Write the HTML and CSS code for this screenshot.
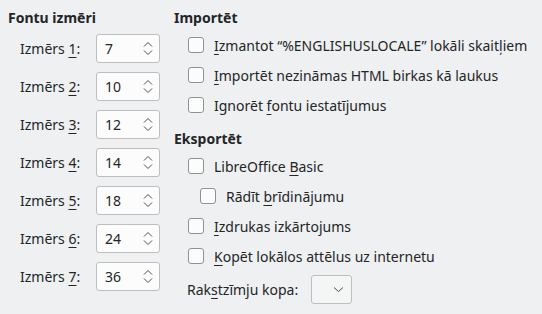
FILE: index.html
```html
<!DOCTYPE html>
<html lang="lv">
<head>
   <meta charset="UTF-8">
   <title>HTML saderība</title>
   <link rel="stylesheet" href="styles.css">
</head>
<body>
   <div class="page">
       <!-- Font sizes column -->
       <section class="sizes">
           <div class="heading">Fontu izmēri</div>
           <div class="size-list">
               <div class="size-row"><span class="size-label">Izmērs <u>1</u>:</span><div class="spin"><span>7</span><svg width="10" height="15" viewBox="0 0 10 15"><path d="M1 5.5 L5 1.5 L9 5.5 M1 9.5 L5 13.5 L9 9.5" fill="none" stroke="#4d4d4d" stroke-width="1"/></svg></div></div>
               <div class="size-row"><span class="size-label">Izmērs <u>2</u>:</span><div class="spin"><span>10</span><svg width="10" height="15" viewBox="0 0 10 15"><path d="M1 5.5 L5 1.5 L9 5.5 M1 9.5 L5 13.5 L9 9.5" fill="none" stroke="#4d4d4d" stroke-width="1"/></svg></div></div>
               <div class="size-row"><span class="size-label">Izmērs <u>3</u>:</span><div class="spin"><span>12</span><svg width="10" height="15" viewBox="0 0 10 15"><path d="M1 5.5 L5 1.5 L9 5.5 M1 9.5 L5 13.5 L9 9.5" fill="none" stroke="#4d4d4d" stroke-width="1"/></svg></div></div>
               <div class="size-row"><span class="size-label">Izmērs <u>4</u>:</span><div class="spin"><span>14</span><svg width="10" height="15" viewBox="0 0 10 15"><path d="M1 5.5 L5 1.5 L9 5.5 M1 9.5 L5 13.5 L9 9.5" fill="none" stroke="#4d4d4d" stroke-width="1"/></svg></div></div>
               <div class="size-row"><span class="size-label">Izmērs <u>5</u>:</span><div class="spin"><span>18</span><svg width="10" height="15" viewBox="0 0 10 15"><path d="M1 5.5 L5 1.5 L9 5.5 M1 9.5 L5 13.5 L9 9.5" fill="none" stroke="#4d4d4d" stroke-width="1"/></svg></div></div>
               <div class="size-row"><span class="size-label">Izmērs <u>6</u>:</span><div class="spin"><span>24</span><svg width="10" height="15" viewBox="0 0 10 15"><path d="M1 5.5 L5 1.5 L9 5.5 M1 9.5 L5 13.5 L9 9.5" fill="none" stroke="#4d4d4d" stroke-width="1"/></svg></div></div>
               <div class="size-row"><span class="size-label">Izmērs <u>7</u>:</span><div class="spin"><span>36</span><svg width="10" height="15" viewBox="0 0 10 15"><path d="M1 5.5 L5 1.5 L9 5.5 M1 9.5 L5 13.5 L9 9.5" fill="none" stroke="#4d4d4d" stroke-width="1"/></svg></div></div>
           </div>
       </section>

       <!-- Import / export column -->
       <section class="options">
           <div class="heading">Importēt</div>
           <div class="check-list first">
               <label class="check"><span class="box"></span><span><u>I</u>zmantot “%ENGLISHUSLOCALE” lokāli skaitļiem</span></label>
               <label class="check"><span class="box"></span><span><u>I</u>mportēt nezināmas HTML birkas kā laukus</span></label>
               <label class="check"><span class="box"></span><span>Ignorēt <u>f</u>ontu iestatījumus</span></label>
           </div>
           <div class="heading export">Eksportēt</div>
           <div class="check-list">
               <label class="check"><span class="box"></span><span>LibreOffice <u>B</u>asic</span></label>
               <label class="check sub"><span class="box"></span><span>Rādīt <u>b</u>rīdinājumu</span></label>
               <label class="check"><span class="box"></span><span><u>I</u>zdrukas izkārtojums</span></label>
               <label class="check"><span class="box"></span><span><u>K</u>opēt lokālos attēlus uz internetu</span></label>
           </div>
           <div class="charset">
               <span>Rak<u>s</u>tzīmju kopa:</span>
               <div class="combo"><svg width="11" height="7" viewBox="0 0 11 7"><path d="M1 1.5 L5.5 5.5 L10 1.5" fill="none" stroke="#4d4d4d" stroke-width="1"/></svg></div>
           </div>
       </section>
   </div>
</body>
</html>
```

FILE: styles.css
```css
/* page base */
body {
    margin: 0;
    background-color: #eff0f1;
    color: #232627;
    font-family: 'Noto Sans', sans-serif;
    font-size: 14px;
}

u {
    text-decoration-thickness: 1px;
    text-underline-offset: 3px;
}

.page {
    display: grid;
    grid-template-columns: 174px 1fr;
    height: 314px;
}

.heading {
    font-weight: bold;
    height: 20px;
    line-height: 20px;
    margin-top: 8px;
}

/* left column: font sizes */
.sizes {
    padding-left: 8px;
}

.size-list {
    display: flex;
    flex-direction: column;
    gap: 9px;
    margin-top: 6px;
    padding-left: 12px;
}

.size-row {
    display: flex;
    align-items: center;
    height: 29px;
}

.size-label {
    width: 76px;
}

.spin {
    box-sizing: border-box;
    width: 64px;
    height: 29px;
    display: flex;
    align-items: center;
    justify-content: space-between;
    padding: 0 6px 0 8px;
    background-color: #fcfcfc;
    border: 1px solid #bcbebf;
    border-radius: 3px;
}

/* right column: checkboxes */
.check-list {
    display: flex;
    flex-direction: column;
    margin-top: 2px;
}

.check {
    display: flex;
    align-items: center;
    gap: 10px;
    height: 30px;
    padding-left: 14px;
}

.check.sub {
    padding-left: 26px;
}

.box {
    box-sizing: border-box;
    width: 16px;
    height: 16px;
    background-color: #fcfcfc;
    border: 1px solid #8f9293;
    border-radius: 3px;
}

.heading.export {
    margin-top: 9px;
}

.charset {
    display: flex;
    align-items: center;
    gap: 13px;
    margin-top: 4px;
    padding-left: 13px;
}

.combo {
    box-sizing: border-box;
    width: 41px;
    height: 29px;
    display: flex;
    align-items: center;
    justify-content: flex-end;
    padding-right: 7px;
    background-color: #f4f5f5;
    border: 1px solid #bcbebf;
    border-radius: 3px;
}
```
